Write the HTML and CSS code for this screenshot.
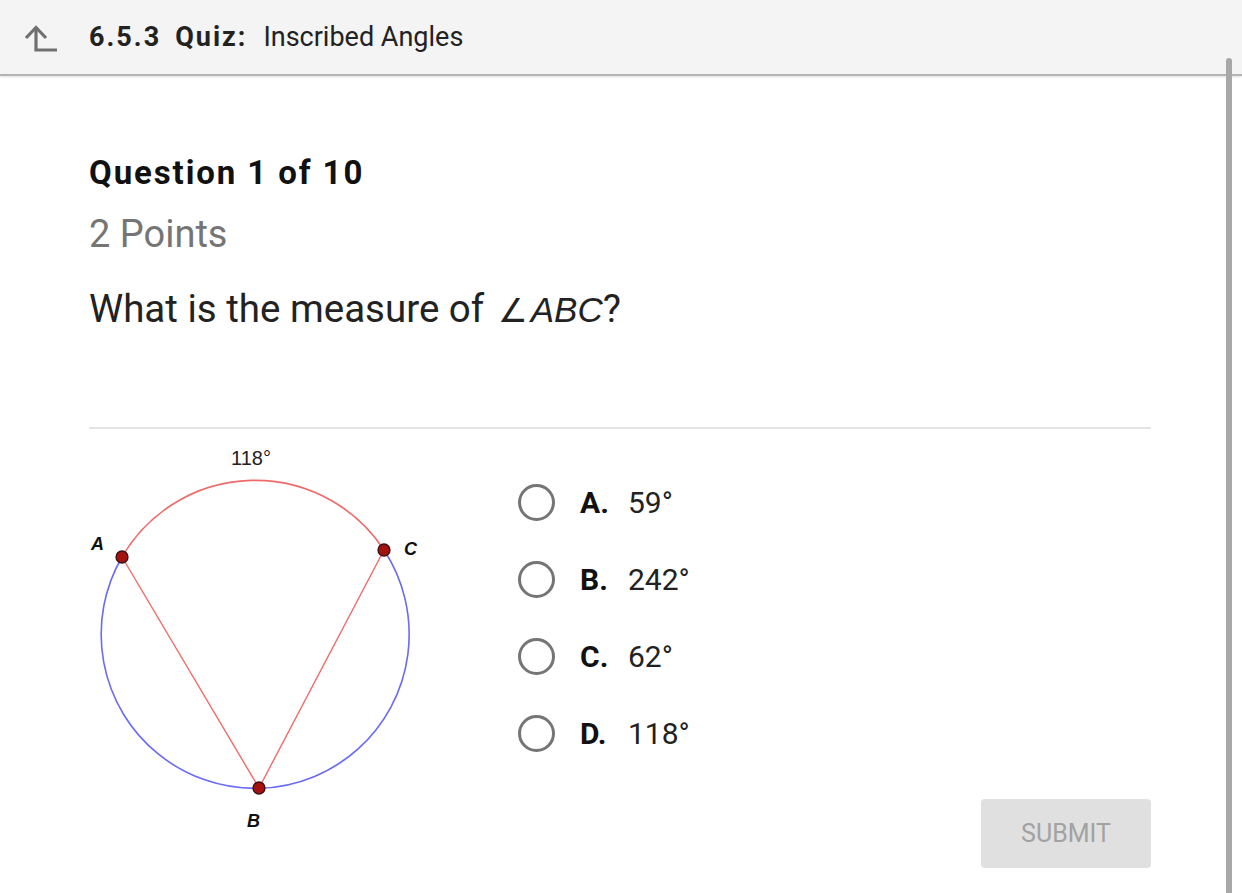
FILE: index.html
```html
<!DOCTYPE html>
<html>
<head>
<meta charset="utf-8">
<link rel="stylesheet" href="styles.css">
</head>
<body>
<header class="topbar">
  <svg class="up-icon" width="34" height="30" viewBox="0 0 34 30">
    <path d="M12 5 V28 H33" fill="none" stroke="#707070" stroke-width="3.2"/>
    <path d="M2 16 L12 5.5 L22 16" fill="none" stroke="#707070" stroke-width="3.2"/>
  </svg>
  <div class="title">
    <span class="num">6.5.3</span>
    <span class="kind">Quiz:</span>
    <span class="name">Inscribed Angles</span>
  </div>
</header>
<div class="scrollbar"></div>
<main class="content">
  <h1 class="qnum">Question 1 of 10</h1>
  <div class="points">2 Points</div>
  <p class="prompt">What is the measure of <span class="math"><span class="angle">∠</span><i>ABC</i></span>?</p>
  <div class="rule"></div>
  <div class="body">
    <svg class="diagram" width="342" height="400" viewBox="0 0 342 400">
      <path d="M34 116 A154 154 0 0 1 296 109" fill="none" stroke="#f06a6a" stroke-width="1.6"/>
      <path d="M296 109 A154 154 0 1 1 34 116" fill="none" stroke="#6a6af5" stroke-width="1.6"/>
      <line x1="34" y1="116" x2="171" y2="347" stroke="#f06a6a" stroke-width="1.4"/>
      <line x1="296" y1="109" x2="171" y2="347" stroke="#f06a6a" stroke-width="1.4"/>
      <circle cx="34" cy="116" r="6" fill="#a3120f" stroke="#3a1010" stroke-width="1.3"/>
      <circle cx="296" cy="109" r="6" fill="#a3120f" stroke="#3a1010" stroke-width="1.3"/>
      <circle cx="171" cy="347" r="6" fill="#a3120f" stroke="#3a1010" stroke-width="1.3"/>
      <text class="arc-label" x="163" y="24" text-anchor="middle">118°</text>
      <text class="pt-label" x="3" y="109">A</text>
      <text class="pt-label" x="316" y="114">C</text>
      <text class="pt-label" x="159" y="386">B</text>
    </svg>
    <div class="options">
      <label class="option"><span class="radio"></span><span class="letter">A.</span><span class="value">59°</span></label>
      <label class="option"><span class="radio"></span><span class="letter">B.</span><span class="value">242°</span></label>
      <label class="option"><span class="radio"></span><span class="letter">C.</span><span class="value">62°</span></label>
      <label class="option"><span class="radio"></span><span class="letter">D.</span><span class="value">118°</span></label>
    </div>
  </div>
  <div class="actions">
    <button class="submit">SUBMIT</button>
  </div>
</main>
</body>
</html>
```
FILE: styles.css
```css
html, body {
  margin: 0;
  padding: 0;
  background: #ffffff;
  height: 100%;
  overflow: hidden;
}
body {
  font-family: Roboto, "Noto Sans", sans-serif;
  color: #222222;
}
.topbar {
  height: 74px;
  background: #f4f4f4;
  border-bottom: 2px solid #b4b4b4;
  box-shadow: 0 1px 2px rgba(0,0,0,0.12);
  display: flex;
  align-items: center;
  padding-left: 24px;
  box-sizing: content-box;
}
.up-icon {
  display: block;
  margin-top: -1px;
}
.title {
  margin-left: 31px;
  font-size: 27px;
  color: #222;
  display: flex;
  align-items: baseline;
}
.title .num, .title .kind {
  font-weight: 700;
  letter-spacing: 2px;
}
.title .num { margin-right: 14px; }
.title .kind { margin-right: 16px; }
.title .name { font-weight: 400; }

.scrollbar {
  position: absolute;
  left: 1226px;
  top: 58px;
  width: 6px;
  bottom: 0;
  background: #a8a8a8;
  border-radius: 3px 3px 0 0;
}

.content {
  width: 1062px;
  margin-left: 89px;
}
.qnum {
  margin: 0;
  padding-top: 77px;
  font-size: 33px;
  font-weight: 700;
  line-height: 40px;
  letter-spacing: 1.9px;
  color: #111;
}
.points {
  margin-top: 20px;
  font-size: 38px;
  line-height: 42px;
  color: #757575;
}
.prompt {
  margin: 32px 0 0 0;
  font-size: 38.5px;
  line-height: 44px;
  color: #222;
}
.math {
  font-family: "Liberation Sans", Arial, sans-serif;
  font-size: 35px;
  margin-left: 4px;
}
.angle {
  font-family: "DejaVu Sans", sans-serif;
  font-size: 33px;
  font-weight: 300;
  margin-right: 3px;
}
.rule {
  margin-top: 94px;
  height: 2px;
  background: #e4e4e4;
}
.body {
  display: flex;
  align-items: flex-start;
}
.diagram {
  display: block;
  margin-top: 12px;
  margin-left: -1px;
}
.arc-label {
  font-family: "Liberation Sans", Arial, sans-serif;
  font-size: 20px;
  fill: #222;
}
.pt-label {
  font-family: "Liberation Sans", Arial, sans-serif;
  font-size: 18px;
  font-weight: 700;
  font-style: italic;
  fill: #111;
}
.options {
  margin-left: 88px;
  margin-top: 55px;
  display: flex;
  flex-direction: column;
  gap: 40px;
}
.option {
  display: flex;
  align-items: center;
  height: 37px;
  font-size: 30px;
  color: #222;
}
.radio {
  width: 31px;
  height: 31px;
  border: 3px solid #757575;
  border-radius: 50%;
  flex: none;
}
.letter {
  margin-left: 25px;
  width: 48px;
  font-weight: 700;
  color: #111;
}
.actions {
  display: flex;
  justify-content: flex-end;
  margin-top: -42px;
}
.submit {
  width: 170px;
  height: 69px;
  border: none;
  border-radius: 4px;
  background: #e0e0e0;
  color: #a2a2a2;
  font-family: Roboto, "Noto Sans", sans-serif;
  font-size: 25px;
  padding: 0;
}
```
